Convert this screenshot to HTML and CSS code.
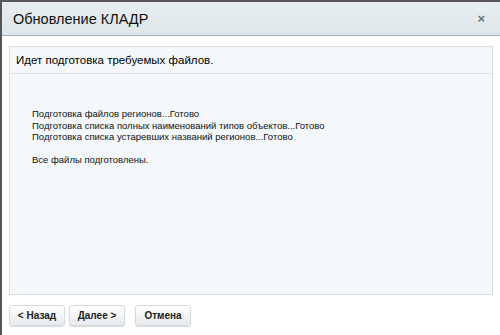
FILE: index.html
```html
<!DOCTYPE html>
<html lang="ru">
<head>
    <meta charset="UTF-8">
    <title>Обновление КЛАДР</title>
    <link rel="stylesheet" href="styles.css">
</head>
<body>
    <div class="dialog">
        <div class="dialog-head">
            <span class="dialog-title">Обновление КЛАДР</span>
            <span class="close">&times;</span>
        </div>
        <div class="dialog-body">
            <div class="panel">
                <div class="panel-title">Идет подготовка требуемых файлов.</div>
                <div class="panel-content">
                    Подготовка файлов регионов...Готово<br>
                    Подготовка списка полных наименований типов объектов...Готово<br>
                    Подготовка списка устаревших названий регионов...Готово<br>
                    <br>
                    Все файлы подготовлены.
                </div>
            </div>
            <div class="buttons">
                <button class="btn">&lt; Назад</button>
                <button class="btn">Далее &gt;</button>
                <button class="btn btn-cancel">Отмена</button>
            </div>
        </div>
    </div>
</body>
</html>
```

FILE: styles.css
```css
body {
    margin: 0;
    padding: 0;
    background: #fff;
    font-family: 'Liberation Sans', Arial, sans-serif;
    color: #000;
}

.dialog {
    width: 500px;
    height: 335px;
    box-sizing: border-box;
    border-top: 2px solid #5a5a5a;
    border-left: 2px solid #555;
    background: #fff;
}

.dialog-head {
    height: 33px;
    padding: 0 12px 0 11px;
    display: flex;
    align-items: center;
    justify-content: space-between;
    background: linear-gradient(#e8eef0, #dee6e9);
    border-bottom: 1px solid #a9afb2;
}

.dialog-title {
    font-size: 14.5px;
    color: #111;
}

.close {
    font-size: 13px;
    font-weight: bold;
    color: #66737f;
    margin-right: 3px;
}

.dialog-body {
    padding: 10px 7px 0 7px;
}

.panel {
    height: 249px;
    box-sizing: border-box;
    border: 1px solid #d5dee3;
    background: #f4f8fa;
}

.panel-title {
    height: 26px;
    line-height: 26px;
    padding-left: 6px;
    font-size: 11.5px;
    border-bottom: 1px solid #dce3e7;
}

.panel-content {
    padding: 34px 22px 0 22px;
    font-size: 9.5px;
    line-height: 11.5px;
    color: #111;
}

.buttons {
    display: flex;
    gap: 4px;
    padding-top: 10px;
}

.btn {
    width: 56px;
    height: 21px;
    padding: 0;
    font-family: 'Liberation Sans', Arial, sans-serif;
    font-size: 10px;
    font-weight: bold;
    color: #222;
    border: 1px solid #d6dadc;
    border-radius: 3px;
    background: linear-gradient(#ffffff, #e6eaec);
    box-shadow: 0 1px 1px rgba(0,0,0,0.15);
}

.btn-cancel {
    margin-left: 6px;
}
```
